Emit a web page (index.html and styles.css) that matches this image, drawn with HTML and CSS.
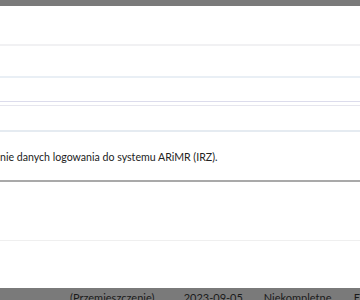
FILE: index.html
```html
<!DOCTYPE html>
<html lang="pl">
<head>
    <meta charset="UTF-8">
    <meta name="viewport" content="width=device-width, initial-scale=1.0">
    <title>Zgłoszenia</title>
    <link rel="stylesheet" href="styles.css">
</head>
<body>
    <div class="backdrop">
        <div class="modal">
            <div class="row row-head"></div>
            <div class="row row-blue"></div>
            <div class="row row-tabs"></div>
            <div class="row row-sub"></div>
            <div class="row row-msg">
                <p class="msg">nie danych logowania do systemu ARiMR (IRZ).</p>
            </div>
            <div class="row row-empty"></div>
            <div class="row row-foot"></div>
        </div>
        <div class="table-row">
            <span class="cell cell-type">(Przemieszczenie)</span>
            <span class="cell cell-date">2023-09-05</span>
            <span class="cell cell-status">Niekompletne</span>
            <span class="cell cell-more">E</span>
        </div>
    </div>
</body>
</html>
```

FILE: styles.css
```css
html, body {
    margin: 0;
    padding: 0;
    height: 100%;
}

body {
    font-family: Lato, "Open Sans", sans-serif;
    background: #7a7a7a;
    color: #222;
    overflow: hidden;
}

.backdrop {
    padding-top: 6px;
}

.modal {
    background: #fff;
    height: 282px;
}

.row {
    box-sizing: border-box;
}

.row-head {
    height: 40px;
    border-bottom: 2px solid #f1f1f3;
}

.row-blue {
    height: 32px;
    border-bottom: 2px solid #e9eff5;
}

.row-tabs {
    height: 24px;
    border-bottom: 1px solid #dcdcec;
}

.row-sub {
    height: 27px;
    margin-top: 3px;
    border-top: 1px solid #e6e6ee;
    border-bottom: 2px solid #e5ebf1;
}

.row-msg {
    height: 50px;
    border-bottom: 2px solid #a9a9a9;
    display: flex;
    align-items: center;
    padding-top: 2px;
}

.msg {
    margin: 0;
    font-size: 10.6px;
    color: #222;
}

.row-empty {
    height: 59px;
    border-bottom: 1px solid #efefef;
}

/* table behind the overlay */
.table-row {
    display: flex;
    font-size: 11px;
    line-height: 14px;
    padding-top: 3px;
    color: #1a1a1a;
    white-space: nowrap;
}

.cell-type {
    margin-left: 70px;
    width: 115px;
}

.cell-date {
    width: 81px;
}

.cell-status {
    width: 91px;
}
```
